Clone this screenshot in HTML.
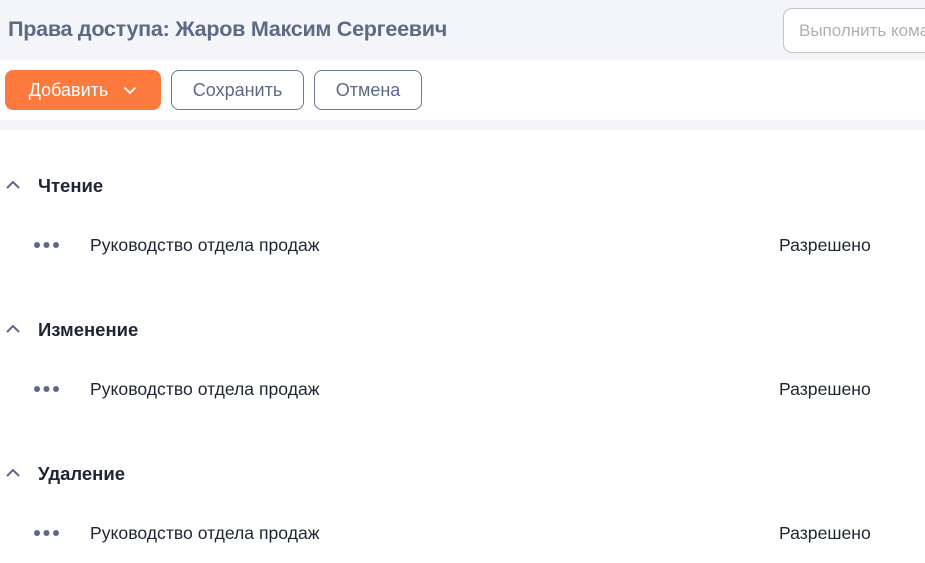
<!DOCTYPE html>
<html><head><meta charset="utf-8"><style>
*{margin:0;padding:0;box-sizing:border-box}
body{width:925px;height:563px;overflow:hidden;background:#fff;font-family:"Liberation Sans",sans-serif;position:relative}
.hdr{position:absolute;left:0;top:0;width:925px;height:60px;background:#f4f5f9}
.title{position:absolute;left:8px;top:16px;font-size:21.6px;font-weight:bold;color:#5c6a85;letter-spacing:-0.3px}
.inp{position:absolute;left:783px;top:8px;width:160px;height:45px;border:1px solid #c4c4c4;border-radius:9px;background:#fff;font-size:17px;color:#b0b0b0;padding:12px 0 0 15px;white-space:nowrap}
.strip{position:absolute;left:0;top:120px;width:925px;height:10px;background:#f4f5f9}
.btn{position:absolute;top:70px;height:40px;border-radius:8px;font-size:18px;display:flex;align-items:center;justify-content:center}
.b1{left:5px;width:156px;background:#fc7a3e;color:#fff}
.b2{left:171px;width:133px;border:1px solid #6b7890;color:#5c6a85}
.b3{left:314px;width:108px;border:1px solid #6b7890;color:#5c6a85}
.sec{position:absolute;left:38px;font-size:18.5px;font-weight:bold;color:#1e2533}
.chev{position:absolute;left:5px}
.dots{position:absolute;left:33px}
.item{position:absolute;left:90px;font-size:17.6px;color:#1e2533}
.st{position:absolute;left:779px;font-size:17.6px;color:#1e2533}
</style></head><body>
<div class="hdr"></div>
<div class="title">Права доступа: Жаров Максим Сергеевич</div>
<div class="inp">Выполнить команду</div>
<div class="btn b1">Добавить&nbsp;&nbsp;&nbsp;<svg width="14" height="9" viewBox="0 0 14 9"><path d="M1.5 1.5L7 7l5.5-5.5" fill="none" stroke="#fff" stroke-width="1.8"/></svg></div>
<div class="btn b2">Сохранить</div>
<div class="btn b3">Отмена</div>
<div class="strip"></div>

<svg class="chev" style="top:180px" width="16" height="10" viewBox="0 0 16 10"><path d="M2 8l6-6 6 6" fill="none" stroke="#5c6a85" stroke-width="2"/></svg>
<div class="sec" style="top:175px">Чтение</div>
<svg class="dots" style="top:241px" width="27" height="8"><circle cx="4" cy="4" r="3" fill="#5c6a85"/><circle cx="13.5" cy="4" r="3" fill="#5c6a85"/><circle cx="23" cy="4" r="3" fill="#5c6a85"/></svg>
<div class="item" style="top:235px">Руководство отдела продаж</div>
<div class="st" style="top:235px">Разрешено</div>

<svg class="chev" style="top:324px" width="16" height="10" viewBox="0 0 16 10"><path d="M2 8l6-6 6 6" fill="none" stroke="#5c6a85" stroke-width="2"/></svg>
<div class="sec" style="top:319px">Изменение</div>
<svg class="dots" style="top:385px" width="27" height="8"><circle cx="4" cy="4" r="3" fill="#5c6a85"/><circle cx="13.5" cy="4" r="3" fill="#5c6a85"/><circle cx="23" cy="4" r="3" fill="#5c6a85"/></svg>
<div class="item" style="top:379px">Руководство отдела продаж</div>
<div class="st" style="top:379px">Разрешено</div>

<svg class="chev" style="top:468px" width="16" height="10" viewBox="0 0 16 10"><path d="M2 8l6-6 6 6" fill="none" stroke="#5c6a85" stroke-width="2"/></svg>
<div class="sec" style="top:463px">Удаление</div>
<svg class="dots" style="top:529px" width="27" height="8"><circle cx="4" cy="4" r="3" fill="#5c6a85"/><circle cx="13.5" cy="4" r="3" fill="#5c6a85"/><circle cx="23" cy="4" r="3" fill="#5c6a85"/></svg>
<div class="item" style="top:523px">Руководство отдела продаж</div>
<div class="st" style="top:523px">Разрешено</div>
</body></html>
